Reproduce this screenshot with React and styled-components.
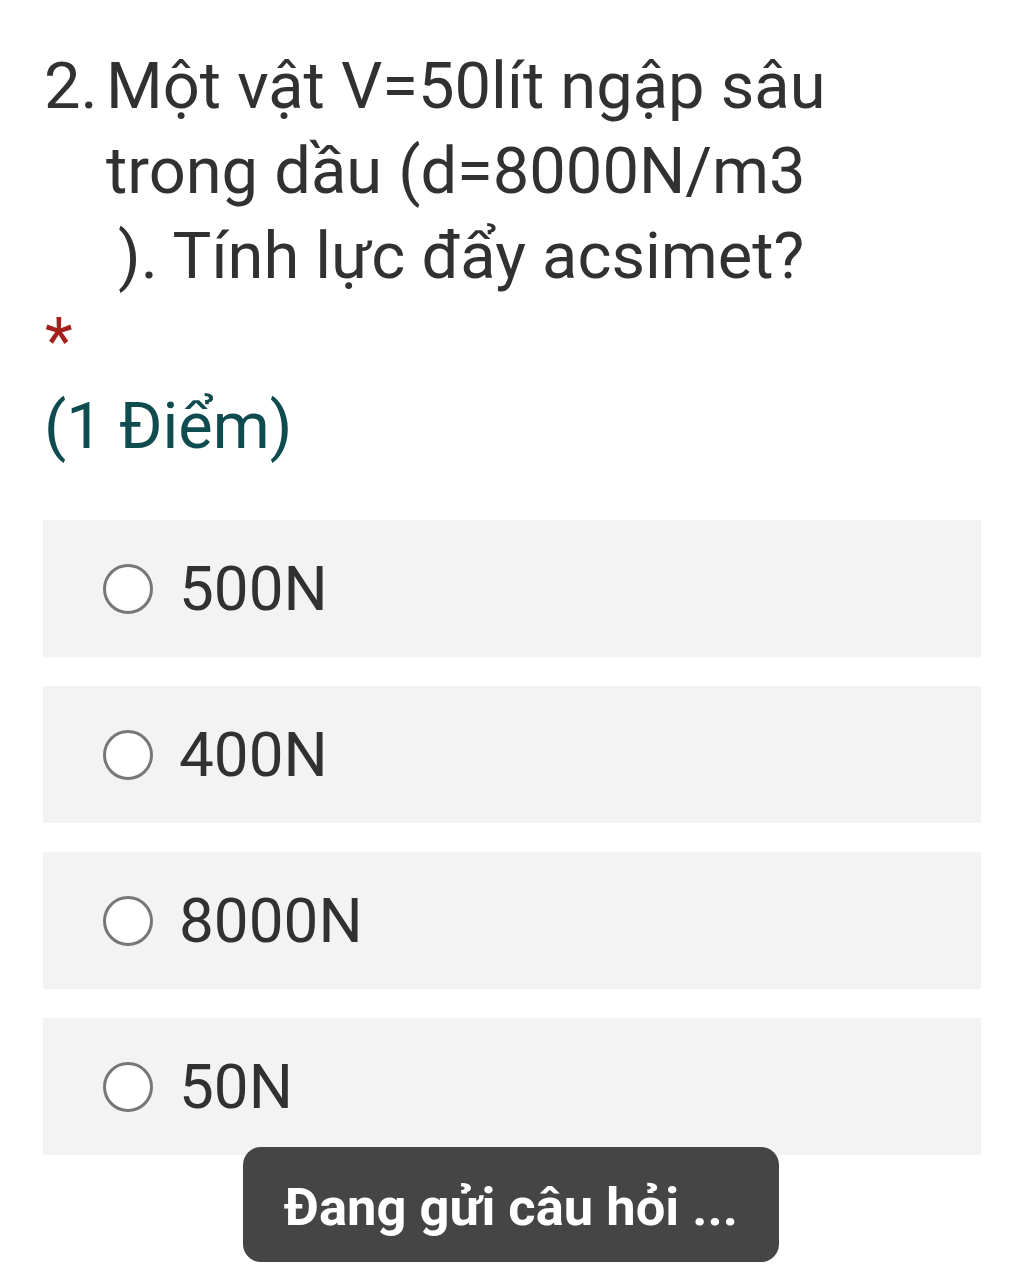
import React from "react";
import styled, { createGlobalStyle } from "styled-components";

const Global = createGlobalStyle`
  html, body { margin: 0; padding: 0; background: #ffffff; }
  body { font-family: Roboto, "Noto Sans", "Liberation Sans", sans-serif; }
`;

const Page = styled.div`
  position: relative;
  width: 1024px;
  height: 1280px;
  overflow: hidden;
  background: #ffffff;
`;

const Form = styled.div`
  padding: 44px 43px 0 43px;
  display: flex;
  flex-direction: column;
`;

const Question = styled.div`
  display: flex;
  font-size: 65px;
  line-height: 85px;
  color: #313131;
`;

const Number = styled.div`
  width: 62px;
  flex: none;
  padding-left: 1px;
`;

const QText = styled.div`
  display: flex;
  flex-direction: column;
`;

const Line = styled.span`
  display: block;
  white-space: nowrap;
  padding-left: ${(p) => p.$indent || 0}px;
`;

const Required = styled.div`
  font-size: 64px;
  line-height: 85px;
  color: #a3201c;
  padding-left: 2px;
`;

const Points = styled.div`
  font-size: 65px;
  line-height: 85px;
  color: #0f4c4f;
  padding-left: 1px;
`;

const Options = styled.div`
  margin-top: 51px;
  display: flex;
  flex-direction: column;
  gap: 29px;
`;

const Option = styled.label`
  height: 137px;
  background: #f3f3f3;
  display: flex;
  align-items: center;
  padding-left: 60px;
  gap: 26px;
`;

const Radio = styled.span`
  width: 50px;
  height: 50px;
  box-sizing: border-box;
  border-radius: 50%;
  border: 3px solid #777777;
  background: #ffffff;
  flex: none;
`;

const OptionText = styled.span`
  font-size: 62px;
  line-height: 1;
  color: #313131;
`;

const Toast = styled.div`
  position: absolute;
  left: 243px;
  top: 1147px;
  width: 536px;
  height: 115px;
  box-sizing: border-box;
  border-radius: 18px;
  background: #454545;
  color: #ffffff;
  font-weight: 700;
  font-size: 52.5px;
  display: flex;
  align-items: center;
  justify-content: center;
  padding-top: 4px;
`;

const options = ["500N", "400N", "8000N", "50N"];

export default function App() {
  return (
    <Page>
      <Global />
      <Form>
        <Question>
          <Number>2.</Number>
          <QText>
            <Line>Một vật V=50lít ngập sâu</Line>
            <Line>trong dầu (d=8000N/m3</Line>
            <Line $indent={12}>). Tính lực đẩy acsimet?</Line>
          </QText>
        </Question>
        <Required>*</Required>
        <Points>(1 Điểm)</Points>
        <Options>
          {options.map((o) => (
            <Option key={o}>
              <Radio />
              <OptionText>{o}</OptionText>
            </Option>
          ))}
        </Options>
      </Form>
      <Toast>Đang gửi câu hỏi ...</Toast>
    </Page>
  );
}
